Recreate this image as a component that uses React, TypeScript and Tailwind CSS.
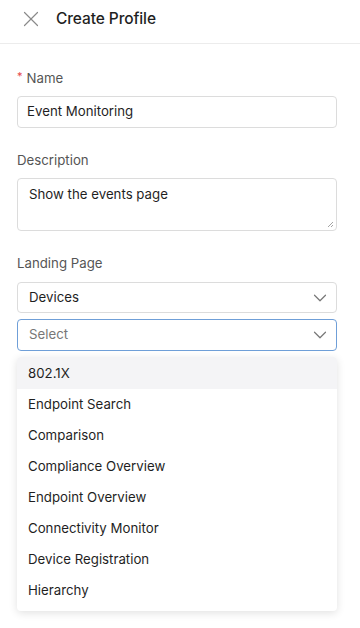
import { ChevronDown, X } from "lucide-react";

const pages = [
  "802.1X",
  "Endpoint Search",
  "Comparison",
  "Compliance Overview",
  "Endpoint Overview",
  "Connectivity Monitor",
  "Device Registration",
  "Hierarchy",
];

export default function App() {
  return (
    <div className="h-[628px] w-[360px] bg-white text-[#1f1f1f] font-['Inter',sans-serif] overflow-hidden">
      {/* Header */}
      <div className="flex h-[44px] items-start gap-[12px] border-b border-[#ececec] pl-[18px] pt-[6px]">
        <X className="h-[26px] w-[26px] text-[#8a8a8a]" strokeWidth={1.1} />
        <span className="mt-[2px] text-[15.5px] font-medium leading-[22px] tracking-[-0.1px]">Create Profile</span>
      </div>

      <div className="flex flex-col pl-[17px] pr-[23px] pt-[24px] text-[13.25px]">
        <label className="flex items-center leading-[20px] text-[#555]">
          <span className="mr-[4px] -mt-[4px] text-[11px] text-[#e5484d]">*</span>Name
        </label>
        <div className="mt-[8px] flex h-[32px] items-center rounded-[4px] border border-[#dcdcdc] px-[9px]">
          Event Monitoring
        </div>

        <label className="mt-[22px] leading-[20px] text-[#555]">Description</label>
        <div className="relative mt-[8px] h-[53px] rounded-[4px] border border-[#dcdcdc] px-[11px] pt-[6px]">
          Show the events page
          <svg className="absolute bottom-[2px] right-[2px]" width="7" height="7" viewBox="0 0 7 7">
            <path d="M1 6L6 1M4 6L6 4" stroke="#9a9a9a" strokeWidth="0.9" />
          </svg>
        </div>

        <label className="mt-[22px] leading-[20px] text-[#555]">Landing Page</label>
        <div className="mt-[9px] flex h-[31px] items-center justify-between rounded-[4px] border border-[#dcdcdc] pl-[11px] pr-[5px]">
          Devices
          <ChevronDown className="h-[22px] w-[22px] text-[#777]" strokeWidth={1.3} />
        </div>
        <div className="mt-[6px] flex h-[32px] items-center justify-between rounded-[4px] border border-[#6f9fd8] pl-[11px] pr-[5px] text-[#777]">
          Select
          <ChevronDown className="h-[22px] w-[22px] text-[#777]" strokeWidth={1.3} />
        </div>

        {/* Open dropdown menu */}
        <div className="mt-[6px] rounded-[4px] bg-white pb-[5px] shadow-[0_2px_8px_rgba(0,0,0,0.12)]">
          {pages.map((p, i) => (
            <div
              key={p}
              className={`flex items-center px-[11px] pt-[1px] ${i === 0 ? "h-[32px] rounded-t-[4px] bg-[#f4f4f6]" : "h-[31px]"}`}
            >
              {p}
            </div>
          ))}
        </div>
      </div>
    </div>
  );
}
